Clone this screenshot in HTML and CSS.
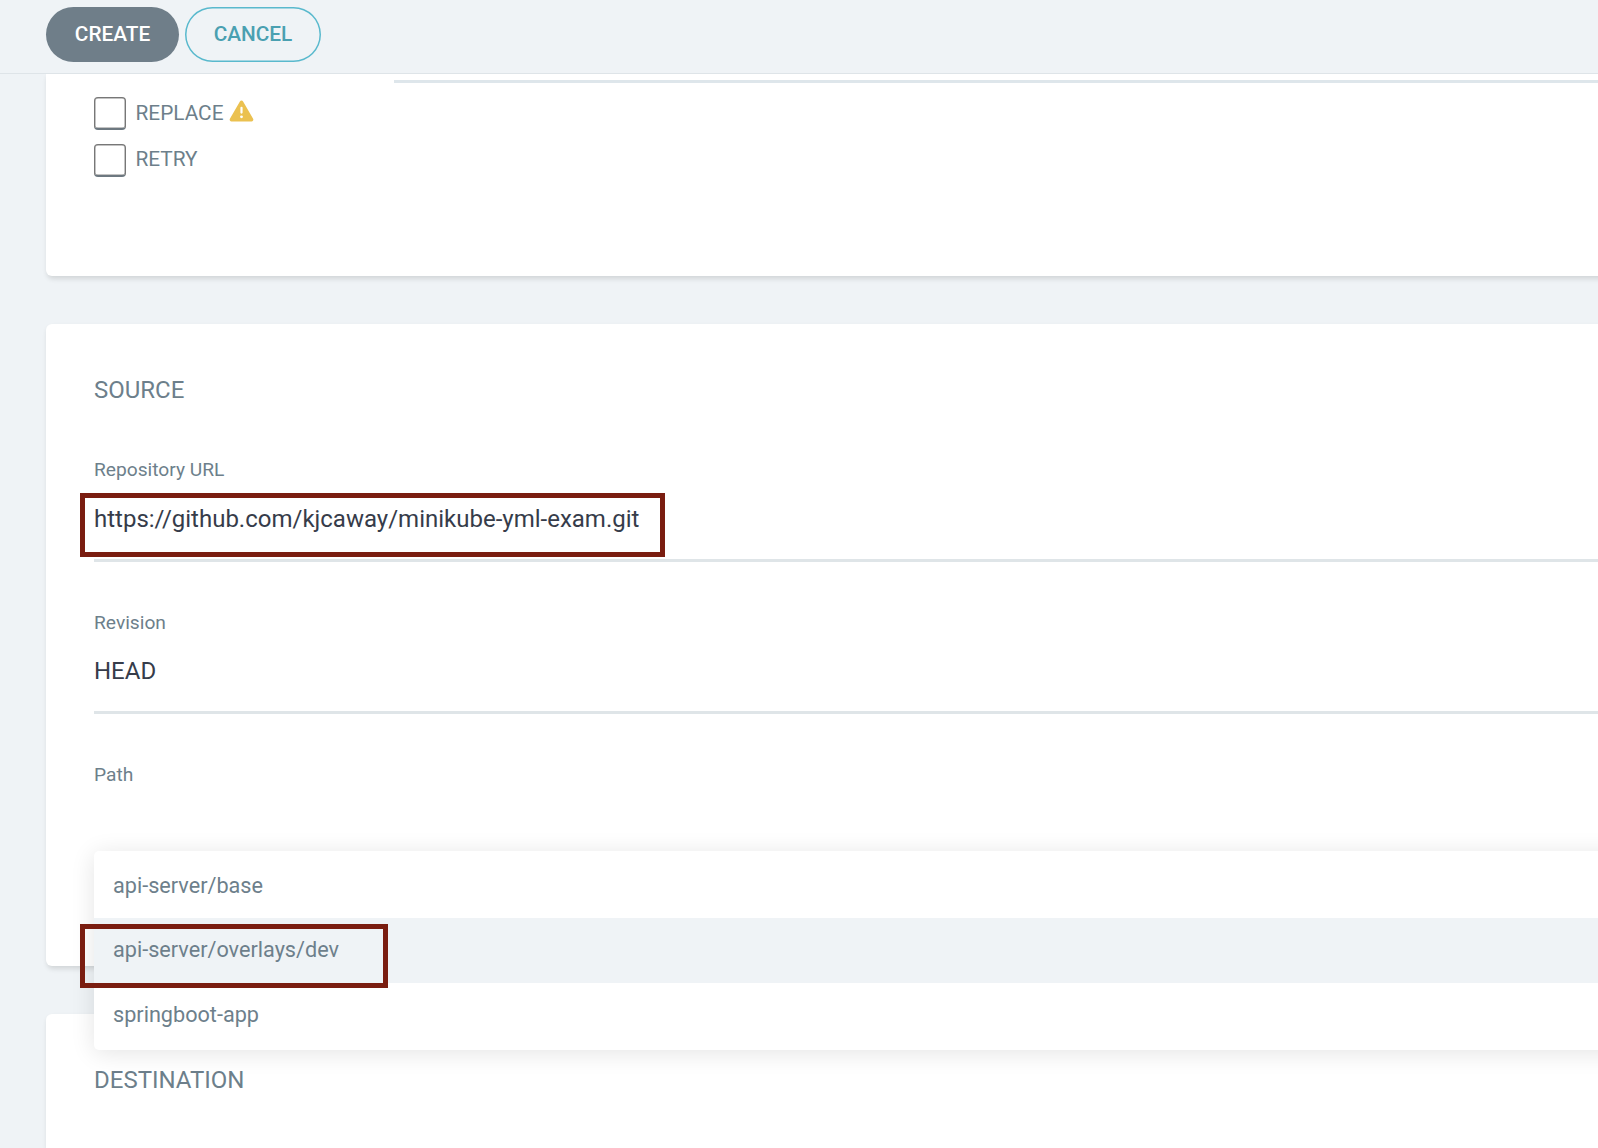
FILE: index.html
```html
<!DOCTYPE html>
<html lang="en">
	<head>
		<meta charset="utf-8">
		<title>Create application</title>
		<link rel="stylesheet" href="styles.css">
	</head>
	<body>
		<header class="toolbar">
			<button class="btn btn-create">CREATE</button>
			<button class="btn btn-cancel">CANCEL</button>
		</header>

		<section class="card card-sync">
			<div class="sync-line"></div>
			<div class="check-row">
				<span class="checkbox"></span>
				<span class="check-label">REPLACE</span>
				<svg class="warning" viewBox="0 0 24 22">
					<path d="M10.4 1.4a1.9 1.9 0 0 1 3.2 0l10 17.3a1.8 1.8 0 0 1-1.6 2.7H2a1.8 1.8 0 0 1-1.6-2.7z" fill="#ebc150"/>
					<path d="M12 7.8v4.8" stroke="#fff" stroke-width="2.2" stroke-linecap="round"/>
					<circle cx="12" cy="16.8" r="1.4" fill="#fff"/>
				</svg>
			</div>
			<div class="check-row check-row-retry">
				<span class="checkbox"></span>
				<span class="check-label">RETRY</span>
			</div>
		</section>

		<section class="card card-source">
			<h2 class="card-title">SOURCE</h2>
			<div class="field">
				<div class="field-label">Repository URL</div>
				<div class="field-value">https://github.com/kjcaway/minikube-yml-exam.git</div>
				<div class="mark mark-url"></div>
			</div>
			<div class="field">
				<div class="field-label">Revision</div>
				<div class="field-value">HEAD</div>
			</div>
			<div class="field">
				<div class="field-label">Path</div>
				<div class="field-value"></div>
				<ul class="dropdown">
					<li class="option">api-server/base</li>
					<li class="option option-selected">api-server/overlays/dev<div class="mark mark-path"></div></li>
					<li class="option option-last">springboot-app</li>
				</ul>
			</div>
		</section>

		<section class="card card-destination">
			<h2 class="card-title">DESTINATION</h2>
		</section>
	</body>
</html>
```

FILE: styles.css
```css
*
{
	box-sizing: border-box;
}

body
{
	margin: 0;
	height: 1148px;
	overflow: hidden;
	background-color: #eff3f6;
	font-family: Roboto, sans-serif;
	color: #6d7f8b;
}

.toolbar
{
	position: relative;
	z-index: 2;
	display: flex;
	gap: 6px;
	height: 74px;
	padding: 7px 0 0 46px;
	background-color: #eff3f6;
	border-bottom: 1px solid #dee4e8;
}

.btn
{
	height: 55px;
	padding: 0 0 2px;
	border: 0;
	border-radius: 28px;
	font-family: inherit;
	font-size: 20.8px;
	font-weight: 500;
}

.btn-create
{
	width: 133px;
	background-color: #6f7e89;
	color: #fff;
}

.btn-cancel
{
	width: 136px;
	background-color: transparent;
	box-shadow: inset 0 0 0 1.5px #59b9cd;
	color: #4aa0b1;
}

/* cards run off the right side of the window */
.card
{
	margin-left: 46px;
	margin-right: -40px;
	padding-left: 48px;
	background-color: #fff;
	border-radius: 6px;
	box-shadow: 1px 3px 5px rgba(0, 0, 0, 0.12);
}

/* sync options */
.card-sync
{
	height: 202px;
	padding-top: 6px;
	border-top-left-radius: 0;
}

.sync-line
{
	height: 3px;
	margin: 0 0 6px 300px;
	background-color: #dee6eb;
}

.check-row
{
	display: flex;
	align-items: center;
	height: 47px;
}

.checkbox
{
	width: 32px;
	height: 33px;
	margin-top: 2px;
	border: 1px solid #777;
	border-bottom: 2px solid #6d7880;
	border-radius: 4px;
	box-shadow: inset 0 0 0 0.5px #888;
}

.check-label
{
	margin-left: 9.5px;
	font-size: 20.8px;
}

.check-row-retry .check-label
{
	margin-top: -2px;
}

.warning
{
	width: 25px;
	height: 22px;
	margin: -4px 0 0 6px;
}

/* source */
.card-source
{
	height: 642px;
	margin-top: 48px;
	padding-top: 50px;
}

.card-title
{
	margin: 0;
	height: 32px;
	line-height: 32px;
	font-size: 24px;
	font-weight: 400;
}

.field
{
	position: relative;
	height: 152px;
	padding-top: 49px;
}

.card-title + .field
{
	height: 156px;
	padding-top: 52px;
}

.field-label
{
	height: 24px;
	line-height: 24px;
	font-size: 19.2px;
}

.field-value
{
	height: 79px;
	padding-top: 20px;
	border-bottom: 3px solid #dfe5e8;
	line-height: 32px;
	font-size: 24px;
	color: #363c4a;
}

.card-title + .field .field-value
{
	height: 80px;
	padding-top: 21px;
}

/* suggestions */
.dropdown
{
	position: absolute;
	z-index: 1;
	top: 137px;
	left: 0;
	right: 0;
	margin: 0;
	padding: 1px 0;
	list-style: none;
	background-color: #fff;
	border-radius: 5px;
	box-shadow: 0 3px 24px rgba(0, 0, 0, 0.11);
}

.option
{
	position: relative;
	height: 66px;
	padding-left: 19px;
	line-height: 68px;
	font-size: 21.65px;
}

.option-selected
{
	height: 65px;
	line-height: 64px;
	background-color: #eff3f6;
}

.option-last
{
	line-height: 64px;
}

/* red highlight frames */
.mark
{
	position: absolute;
	left: -14px;
	height: 64px;
	border: 5px solid #7a1d10;
}

.mark-url
{
	top: 87px;
	width: 585px;
}

.mark-path
{
	top: 6px;
	width: 308px;
}

.card-destination
{
	height: 134px;
	margin-top: 48px;
	padding-top: 50px;
	border-bottom-left-radius: 0;
}
```
